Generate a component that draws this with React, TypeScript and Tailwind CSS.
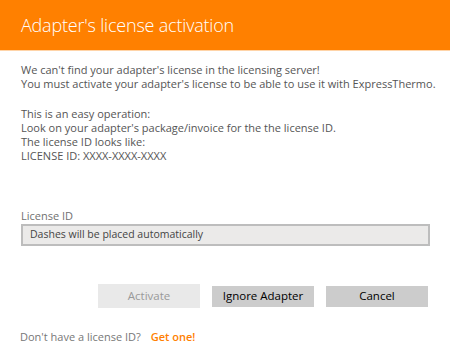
export default function App() {
  return (
    <div className="w-[450px] h-[355px] bg-white overflow-hidden" style={{ fontFamily: '"Open Sans", "Noto Sans", sans-serif' }}>
      <header className="h-[51px] bg-[#ff8000] border-b border-[#ffd4a8] flex items-center px-[21px]">
        <h1 className="text-white text-[18px] font-light leading-none tracking-[-0.2px]">Adapter's license activation</h1>
      </header>

      <div className="px-[21px] pt-[12px] text-[11px] leading-[14px] text-[#555] whitespace-nowrap">
        <p>We can't find your adapter's license in the licensing server!</p>
        <p>You must activate your adapter's license to be able to use it with ExpressThermo.</p>
        <p className="mt-[16px]">This is an easy operation:</p>
        <p>Look on your adapter's package/invoice for the the license ID.</p>
        <p>The license ID looks like:</p>
        <p>LICENSE ID: XXXX-XXXX-XXXX</p>
      </div>

      <div className="px-[21px] mt-[45px]">
        <label className="block text-[11px] leading-[15px] text-[#707070]">License ID</label>
        <div className="mt-[1px] h-[22px] w-[409px] border-2 border-[#bdbdbd] bg-[#ebeae9] flex items-center px-[7px] text-[10.5px] text-[#444]">
          Dashes will be placed automatically
        </div>
      </div>

      <div className="flex items-center justify-end gap-[12px] pr-[22px] mt-[38px]">
        <button className="w-[102px] h-[24px] bg-[#e9e9e9] text-[#999] text-[11.5px]">Activate</button>
        <button className="w-[102px] h-[21px] bg-[#cccccc] text-black text-[11.5px]">Ignore Adapter</button>
        <button className="w-[102px] h-[21px] bg-[#cccccc] text-black text-[11.5px]">Cancel</button>
      </div>

      <div className="px-[20px] mt-[21px] text-[11px] leading-[15px] flex gap-[10px]">
        <span className="text-[#777]">Don't have a license ID?</span>
        <span className="text-[#ff8000] font-semibold">Get one!</span>
      </div>
    </div>
  );
}
